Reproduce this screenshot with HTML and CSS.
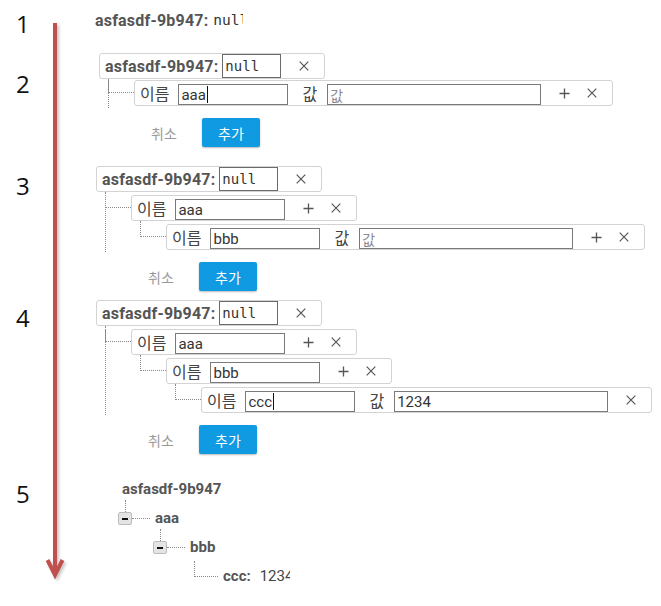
FILE: index.html
```html
<!DOCTYPE html>
<html lang="ko">
<head>
<meta charset="utf-8">
<title>JSON 트리 편집 단계</title>
<link rel="stylesheet" href="styles.css">
</head>
<body>
<main class="page">
  <svg class="arrow" width="80" height="600" viewBox="0 0 80 600" aria-hidden="true">
    <line x1="55" y1="23" x2="55" y2="573" stroke="#c0504d" stroke-width="4"/>
    <polyline points="47.5,560 55,575 62.5,560" fill="none" stroke="#c0504d" stroke-width="4" stroke-linejoin="miter"/>
  </svg>

  <section class="step step-1">
    <div class="num">1</div>
    <div class="content">
      <div class="summary"><span class="key">asfasdf-9b947:</span><span class="mono clip-null">null</span></div>
    </div>
  </section>

  <section class="step step-2">
    <div class="num">2</div>
    <div class="content">
      <div class="node">
        <div class="row">
          <span class="key">asfasdf-9b947:</span>
          <span class="field field-null mono">null</span>
          <span class="icons">
            <span class="icon-btn"><svg width="10" height="10" viewBox="0 0 10 10"><path d="M0.7 0.7L9.3 9.3M9.3 0.7L0.7 9.3" stroke="#555" stroke-width="1.2"/></svg></span>
          </span>
        </div>
        <div class="children top gap1">
          <div class="node">
            <div class="row">
              <span class="label">이름</span>
              <span class="field field-name">aaa<span class="caret"></span></span>
              <span class="label label-val">값</span>
              <span class="field field-value"><span class="ph">값</span></span>
              <span class="icons">
                <span class="icon-btn"><svg width="11" height="11" viewBox="0 0 11 11"><path d="M5.5 0.5V10.5M0.5 5.5H10.5" stroke="#555" stroke-width="1.3"/></svg></span>
                <span class="icon-btn"><svg width="10" height="10" viewBox="0 0 10 10"><path d="M0.7 0.7L9.3 9.3M9.3 0.7L0.7 9.3" stroke="#555" stroke-width="1.2"/></svg></span>
              </span>
            </div>
          </div>
        </div>
      </div>
      <div class="actions"><button class="btn-cancel" type="button">취소</button><button class="btn-add" type="button">추가</button></div>
    </div>
  </section>

  <section class="step step-3">
    <div class="num">3</div>
    <div class="content">
      <div class="node">
        <div class="row">
          <span class="key">asfasdf-9b947:</span>
          <span class="field field-null mono">null</span>
          <span class="icons">
            <span class="icon-btn"><svg width="10" height="10" viewBox="0 0 10 10"><path d="M0.7 0.7L9.3 9.3M9.3 0.7L0.7 9.3" stroke="#555" stroke-width="1.2"/></svg></span>
          </span>
        </div>
        <div class="children top">
          <div class="node">
            <div class="row">
              <span class="label">이름</span>
              <span class="field field-name">aaa</span>
              <span class="icons">
                <span class="icon-btn"><svg width="11" height="11" viewBox="0 0 11 11"><path d="M5.5 0.5V10.5M0.5 5.5H10.5" stroke="#555" stroke-width="1.3"/></svg></span>
                <span class="icon-btn"><svg width="10" height="10" viewBox="0 0 10 10"><path d="M0.7 0.7L9.3 9.3M9.3 0.7L0.7 9.3" stroke="#555" stroke-width="1.2"/></svg></span>
              </span>
            </div>
            <div class="children">
              <div class="node">
                <div class="row">
                  <span class="label">이름</span>
                  <span class="field field-name">bbb</span>
                  <span class="label label-val">값</span>
                  <span class="field field-value"><span class="ph">값</span></span>
                  <span class="icons">
                    <span class="icon-btn"><svg width="11" height="11" viewBox="0 0 11 11"><path d="M5.5 0.5V10.5M0.5 5.5H10.5" stroke="#555" stroke-width="1.3"/></svg></span>
                    <span class="icon-btn"><svg width="10" height="10" viewBox="0 0 10 10"><path d="M0.7 0.7L9.3 9.3M9.3 0.7L0.7 9.3" stroke="#555" stroke-width="1.2"/></svg></span>
                  </span>
                </div>
              </div>
            </div>
          </div>
        </div>
      </div>
      <div class="actions"><button class="btn-cancel" type="button">취소</button><button class="btn-add" type="button">추가</button></div>
    </div>
  </section>

  <section class="step step-4">
    <div class="num">4</div>
    <div class="content">
      <div class="node">
        <div class="row">
          <span class="key">asfasdf-9b947:</span>
          <span class="field field-null mono">null</span>
          <span class="icons">
            <span class="icon-btn"><svg width="10" height="10" viewBox="0 0 10 10"><path d="M0.7 0.7L9.3 9.3M9.3 0.7L0.7 9.3" stroke="#555" stroke-width="1.2"/></svg></span>
          </span>
        </div>
        <div class="children top">
          <div class="node">
            <div class="row">
              <span class="label">이름</span>
              <span class="field field-name">aaa</span>
              <span class="icons">
                <span class="icon-btn"><svg width="11" height="11" viewBox="0 0 11 11"><path d="M5.5 0.5V10.5M0.5 5.5H10.5" stroke="#555" stroke-width="1.3"/></svg></span>
                <span class="icon-btn"><svg width="10" height="10" viewBox="0 0 10 10"><path d="M0.7 0.7L9.3 9.3M9.3 0.7L0.7 9.3" stroke="#555" stroke-width="1.2"/></svg></span>
              </span>
            </div>
            <div class="children">
              <div class="node">
                <div class="row">
                  <span class="label">이름</span>
                  <span class="field field-name">bbb</span>
                  <span class="icons">
                    <span class="icon-btn"><svg width="11" height="11" viewBox="0 0 11 11"><path d="M5.5 0.5V10.5M0.5 5.5H10.5" stroke="#555" stroke-width="1.3"/></svg></span>
                    <span class="icon-btn"><svg width="10" height="10" viewBox="0 0 10 10"><path d="M0.7 0.7L9.3 9.3M9.3 0.7L0.7 9.3" stroke="#555" stroke-width="1.2"/></svg></span>
                  </span>
                </div>
                <div class="children">
                  <div class="node">
                    <div class="row">
                      <span class="label">이름</span>
                      <span class="field field-name">ccc<span class="caret"></span></span>
                      <span class="label label-val">값</span>
                      <span class="field field-value">1234</span>
                      <span class="icons">
                        <span class="icon-btn"><svg width="10" height="10" viewBox="0 0 10 10"><path d="M0.7 0.7L9.3 9.3M9.3 0.7L0.7 9.3" stroke="#555" stroke-width="1.2"/></svg></span>
                      </span>
                    </div>
                  </div>
                </div>
              </div>
            </div>
          </div>
        </div>
      </div>
      <div class="actions"><button class="btn-cancel" type="button">취소</button><button class="btn-add" type="button">추가</button></div>
    </div>
  </section>

  <section class="step step-5">
    <div class="num">5</div>
    <div class="content">
      <div class="tree">
        <div class="t-root">asfasdf-9b947</div>
        <div class="t-children">
          <div class="t-node">
            <div class="t-row"><span class="toggle"></span><span class="t-dash"></span><span class="t-label">aaa</span></div>
            <div class="t-children nested">
              <div class="t-node">
                <div class="t-row"><span class="toggle"></span><span class="t-dash"></span><span class="t-label">bbb</span></div>
                <div class="t-children nested">
                  <div class="t-node">
                    <div class="t-row"><span class="t-elbow"></span><span class="t-label">ccc:</span><span class="t-value">1234</span></div>
                  </div>
                </div>
              </div>
            </div>
          </div>
        </div>
      </div>
    </div>
  </section>
</main>
</body>
</html>
```

FILE: styles.css
```css
html, body {
  margin: 0;
  padding: 0;
  background: #fff;
}

body {
  font-family: Roboto, "Noto Sans CJK KR", sans-serif;
  color: #333;
  width: 661px;
  height: 606px;
  overflow: hidden;
}

.page {
  position: relative;
  display: flex;
  flex-direction: column;
}

.arrow {
  position: absolute;
  left: 0;
  top: 0;
  filter: drop-shadow(2px 2px 1.5px rgba(0, 0, 0, 0.22));
}

.step {
  display: flex;
  align-items: flex-start;
}

.num {
  width: 79px;
  padding-left: 16px;
  font-family: "Open Sans", "Noto Sans", sans-serif;
  font-size: 24px;
  line-height: 24px;
  color: #111;
}

.content {
  display: flex;
  flex-direction: column;
}

.step-1 { margin-top: 11px; }
.step-1 .num { margin-top: 1px; }

.step-2 { margin-top: 17px; }
.step-2 .num { margin-top: 19px; }
.step-2 .content { padding-left: 4px; }

.step-3 { margin-top: 19px; }
.step-3 .num { margin-top: 8px; }
.step-3 .content { padding-left: 1px; }

.step-4 { margin-top: 9px; }
.step-4 .num { margin-top: 6px; }
.step-4 .content { padding-left: 1px; }

.step-5 { margin-top: 25px; }
.step-5 .num { margin-top: 3px; }
.step-5 .content { padding-left: 23px; }

/* summary line (step 1) */
.summary {
  display: flex;
  align-items: center;
  height: 18px;
}

.key {
  font-weight: 700;
  font-size: 16px;
  letter-spacing: 0.2px;
  color: #555;
  white-space: nowrap;
}

.mono {
  font-family: "DejaVu Sans Mono", "Liberation Mono", monospace;
  font-size: 14px;
}

.clip-null {
  display: inline-block;
  width: 30px;
  overflow: hidden;
  white-space: nowrap;
  margin-left: 5px;
  font-size: 14.5px;
  color: #333;
}

/* editor rows */
.node {
  position: relative;
  --gap: 3px;
}

.row {
  display: flex;
  align-items: center;
  width: max-content;
  height: 26px;
  box-sizing: border-box;
  border: 1px solid #d3d3d3;
  border-radius: 3px;
  padding: 0 6px 0 5px;
  background: #fff;
}

.children {
  margin-left: 9px;
  padding-left: 26px;
}

.children.top {
  border-left: 1px dotted #8a8a8a;
  padding-left: 25px;
  padding-bottom: 2px;
}

.children > .node {
  margin-top: var(--gap);
}

.children.gap1 > .node {
  --gap: 1px;
}

.children > .node::before {
  content: "";
  position: absolute;
  left: -26px;
  top: calc(-1 * var(--gap));
  width: 26px;
  height: calc(var(--gap) + 13px);
  box-sizing: border-box;
  border-left: 1px dotted #8a8a8a;
  border-bottom: 1px dotted #8a8a8a;
}

.label {
  font-family: "Noto Sans CJK KR", sans-serif;
  font-size: 16px;
  line-height: 20px;
  color: #444;
  margin-right: 9px;
}

.label-val {
  margin-left: 14px;
  margin-right: 10px;
}

.field {
  display: flex;
  align-items: center;
  align-self: flex-end;
  height: 21px;
  box-sizing: border-box;
  border: 1px solid #7a7a7a;
  padding: 0 2px;
  font-size: 15px;
  color: #333;
  background: #fff;
  white-space: nowrap;
  overflow: hidden;
}

.field-null {
  width: 59px;
  height: 24px;
  margin-left: 4px;
  border-color: #6a6a6a;
  font-size: 14px;
}

.field-name { width: 110px; }
.field-value { width: 214px; }

.ph {
  font-family: "Noto Sans CJK KR", sans-serif;
  font-size: 14px;
  color: #8a8a8a;
}

.caret {
  display: inline-block;
  width: 1px;
  height: 17px;
  margin-left: 1px;
  background: #111;
}

.icons {
  display: flex;
  margin-left: 9px;
}

.icon-btn {
  width: 28px;
  height: 24px;
  display: flex;
  align-items: center;
  justify-content: center;
}

/* actions */
.actions {
  display: flex;
  align-items: center;
  margin-top: 10px;
  padding-left: 52px;
}

.btn-cancel,
.btn-add {
  font-family: "Noto Sans CJK KR", sans-serif;
  font-size: 14px;
  border: 0;
  padding: 0;
  cursor: pointer;
}

.btn-cancel {
  background: none;
  color: #9a9a9a;
  width: 26px;
  height: 29px;
}

.btn-add {
  margin-left: 25px;
  width: 58px;
  height: 29px;
  background: #109ae2;
  color: #fff;
  border-radius: 2px;
  box-shadow: 0 1px 2px rgba(0, 0, 0, 0.28);
}

/* read-only tree (step 5) */
.t-root {
  height: 20px;
  line-height: 20px;
  padding-left: 4px;
  font-weight: 700;
  font-size: 15px;
  color: #555;
}

.t-children.nested {
  padding-left: 35px;
}

.t-row {
  display: flex;
  align-items: flex-end;
  height: 29px;
  box-sizing: border-box;
  padding-bottom: 3px;
}

.toggle {
  position: relative;
  width: 14px;
  height: 13px;
  box-sizing: border-box;
  border: 1px solid #bcbcbc;
  border-radius: 2px;
  background: #e4e4e4;
  display: flex;
  align-items: center;
  justify-content: center;
}

.toggle::after {
  content: "";
  width: 6px;
  height: 2px;
  background: #111;
}

.toggle::before {
  content: "";
  position: absolute;
  left: 6px;
  bottom: calc(100% + 1px);
  height: 12px;
  border-left: 1px dotted #8a8a8a;
}

.t-dash {
  width: 18px;
  margin-bottom: 6px;
  border-top: 1px dotted #8a8a8a;
}

.t-elbow {
  margin-left: 6px;
  margin-bottom: 6px;
  width: 24px;
  height: 16px;
  box-sizing: border-box;
  border-left: 1px dotted #8a8a8a;
  border-bottom: 1px dotted #8a8a8a;
}

.t-label {
  margin-left: 5px;
  font-weight: 700;
  font-size: 15px;
  line-height: 13px;
  color: #555;
}

.t-value {
  display: inline-block;
  width: 30px;
  margin-left: 9px;
  overflow: hidden;
  white-space: nowrap;
  font-size: 15px;
  line-height: 13px;
  color: #444;
}
```
